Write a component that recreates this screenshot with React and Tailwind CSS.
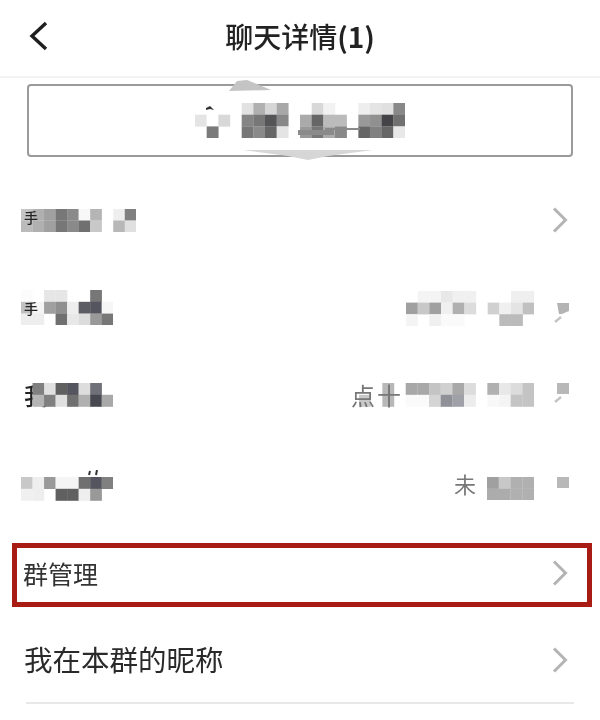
const CJK = { fontFamily: '"Noto Sans CJK SC", "Noto Sans", sans-serif' };

function Mosaic({ rows, w = 11.6, h = 11.7, className = "", children }) {
  const cols = Math.max(...rows.map((r) => r.length));
  return (
    <svg width={cols * w} height={rows.length * h} viewBox={`0 0 ${cols * w} ${rows.length * h}`} className={`block shrink-0 ${className}`}>
      {rows.map((r, y) =>
        r.map((c, x) => (c ? <rect key={`${x}-${y}`} x={x * w} y={y * h} width={w + 0.2} height={h + 0.2} fill={`#${c}`} /> : null))
      )}
      {children}
    </svg>
  );
}

function Chevron({ color = "#b4b4b4" }) {
  return (
    <svg width="16" height="26" viewBox="0 0 16 26" className="block shrink-0">
      <polyline points="2,1.5 13.5,13 2,24.5" fill="none" stroke={color} strokeWidth="3" />
    </svg>
  );
}

const _ = null;
const boxRows = [
  [_, _, _, _, "e2e2e2", "b0b0b0", "d6d6d6", "a8a8a8", _, _, "d8d8d8", "f2f2f2", _, _, "eeeeee", "e4e4e4", "e0e0e0", "888888"],
  ["e4e4e4", "ffffff", "d8d8d8", _, "858585", "777777", "555558", "888888", _, "aaaaaa", "666666", "bbbbbb", "bbbbbb", _, "999999", "909090", "444448", "707070"],
  [_, "7a7a7a", _, _, "777777", "8a8a8a", "666666", "e4e4e4", _, "999999", "777777", "aaaaaa", "888888", _, "666666", "808080", "666666", "e8e8e8"],
];
const row1 = [
  ["c4c4c4", "b0b0b0", "a0a0a0", "777777", "8a8a8a", "f8f8f8", "b5b5b5", _, "eeeeee", "808080"],
  ["bbbbbb", "b0b0b0", "a0a0a0", "777777", "8a8a8a", "707070", "c8c8c8", _, "b8b8b8", "e0e0e0"],
];
const row2 = [
  ["fcfcfc", _, "e6e6e6", "e6e6e6", _, _, "777777", _],
  ["c0c0c0", "f4f4f4", "a0a0a0", "909090", "eeeeee", "5c5c64", "555560", "f6f6f6"],
  ["eeeeee", "eeeeee", _, "707070", "e8e8e8", "dcdcdc", "999999", "777777"],
];
const row3 = [
  [_, "808080", "e0e0e0", "606060", "555560", "dddddd", "707078", _],
  [_, "b5b5b5", "808080", "e0e0e0", "707070", "b0b0b0", "484850", "a8a8a8"],
];
const row4 = [
  ["c8c8c8", "eeeeee", "999999", "f5f5f5", "f5f5f5", "707070", "555560", "808080"],
  ["f0f0f0", "eeeeee", _, "606060", "606060", "eeeeee", "999999", _],
];
const right2 = [
  [_, "f4f4f4", "f4f4f4", "e8e8e8", "f0f0f0", "f0f0f0", _, _, _, "efefef", "efefef"],
  ["a0a0a0", "c8c8c8", "a0a0a0", "f0f0f0", "b0b0b0", "dcdcdc", _, "d0d0d0", "f0f0f0", "e4e4e4", "c0c0c0"],
  ["f4f4f4", _, "f0f0f0", "fafafa", "fafafa", _, _, _, "bbbbbb", "bbbbbb", _],
];
const right3 = [
  [_, _, "b8b8b8", _, "a8a8a8", "a8a8a8", "c4c4c4", "d0d0d0", "a8a8a8", "dcdcdc", _, "b0b0b0", "e8e8e8", "dcdcdc", "c4c4c4"],
  ["c8c8c8", _, "b8b8b8", _, "fafafa", "fafafa", "d4d4d4", "909098", "a0a0a8", "ececec", _, "f8f8f8", "f4f4f4", "c4c4c4", "c4c4c4"],
];
const right4 = [
  ["a0a0a0", "c8c8c8", "b0b0b0", "b0b0b0"],
  ["acacac", "acacac", "b0b0b0", "b0b0b0"],
];

function Tip({ slant = false, tail = true }) {
  return (
    <svg width="16" height="22" viewBox="0 0 16 22" className="block shrink-0">
      {slant ? <polygon points="3,0 15,0 15,8 8,11 5,11" fill="#b4b4b4" /> : <rect x="3" y="0" width="12" height="11" fill="#b8b8b8" />}
      {tail ? <line x1="1" y1="19" x2="7" y2="14" stroke="#c4c4c4" strokeWidth="2.5" /> : null}
    </svg>
  );
}

function Row({ children }) {
  return <div className="flex h-[87.5px] items-center justify-between pl-[21px] pr-[30px]">{children}</div>;
}

export default function App() {
  return (
    <div className="h-[720px] w-[600px] overflow-hidden bg-white blur-[0.4px]" style={CJK}>
      <header className="grid h-[78px] grid-cols-[1fr_auto_1fr] items-center border-b-2 border-[#f3f3f3] pb-[4px]">
        <div className="pl-[29px]">
          <svg width="20" height="32" viewBox="0 0 20 32" className="block">
            <polyline points="17,3 3,16 17,29" fill="none" stroke="#1f1f1f" strokeWidth="3.4" />
          </svg>
        </div>
        <h1 className="text-[28px] font-medium leading-none text-[#222]">
          聊天详情<span className="font-bold">(1)</span>
        </h1>
        <div />
      </header>

      <div className="relative mx-[27px] mt-[6px] flex h-[73px] items-center justify-center rounded-[4px] border-2 border-[#9a9a9a]">
        <Mosaic rows={boxRows} w={11.67} h={11.7}>
          <path d="M130 25h35v2h-35zM103 27h36v5h-36z" fill="#8a8a8a" />
          <path d="M11 5l4-2 4 4-4-1-4 1z" fill="#333" />
        </Mosaic>
        <svg width="50" height="12" viewBox="0 0 50 12" className="absolute left-[196px] top-[-6px]">
          <path d="M12 1 L22 0 L46 10 L4 11 Z" fill="#c4c4c4" />
        </svg>
        <svg width="130" height="12" viewBox="0 0 130 12" className="absolute left-[214px] top-[64px]">
          <path d="M0 0 H130 L85 6 L65 10 L45 6 Z" fill="#d6d6d6" />
        </svg>
      </div>

      <div className="mt-[19.5px]">
        <Row>
          <div className="relative">
            <Mosaic rows={row1} w={11.53} h={11.5} />
            <span className="absolute left-[3px] top-[1px] text-[14px] font-medium leading-none text-[#222]">手</span>
          </div>
          <div className="pr-[2px]">
            <Chevron />
          </div>
        </Row>
        <Row>
          <div className="relative">
            <Mosaic rows={row2} w={11.53} h={11.8} />
            <span className="absolute left-[3px] top-[11px] text-[14px] font-medium leading-none text-[#222]">手</span>
          </div>
          <div className="flex items-start gap-[20px] pt-[1px]">
            <Mosaic rows={right2} w={11.67} h={11.6} />
            <div className="pt-[12px]">
              <Tip slant />
            </div>
          </div>
        </Row>
        <Row>
          <div className="relative">
            <span className="absolute left-[3px] top-0 text-[24px] font-medium leading-none text-[#222]">我</span>
            <Mosaic rows={row3} w={11.53} h={11.8} className="relative" />
          </div>
          <div className="flex items-start">
            <div className="relative">
              <Mosaic rows={right3} w={11.67} h={11.8} />
              <span className="absolute left-[-8px] top-0 text-[24px] leading-none tracking-[2px] text-[#777]">点十</span>
            </div>
            <div className="ml-[20px]">
              <Tip />
            </div>
          </div>
        </Row>
        <Row>
          <div className="relative mt-[12px]">
            <Mosaic rows={row4} w={11.53} h={11.8} />
            <svg width="20" height="6" viewBox="0 0 20 6" className="absolute left-[66px] top-[-7px]">
              <path d="M2 5l1-4M9 5l1-5" stroke="#333" strokeWidth="2" />
            </svg>
          </div>
          <div className="flex items-start pt-[11px]">
            <span className="mr-[11px] mt-[-5px] text-[22px] leading-none text-[#777]">未</span>
            <Mosaic rows={right4} w={11.75} h={11.7} />
            <div className="ml-[20px]">
              <Tip tail={false} />
            </div>
          </div>
        </Row>
      </div>

      <div className="ml-[12px] mr-[8px] mt-[16.5px] flex h-[64px] items-center justify-between border-[5px] border-[#a81c14] pb-[4px] pl-[6px] pr-[19px]">
        <span className="text-[25px] leading-none text-[#333]">群管理</span>
        <Chevron />
      </div>

      <div className="mx-[26px] mt-[10px] flex h-[87px] items-center justify-between border-b-2 border-[#e8e8e8] pr-[6px]">
        <span className="ml-[-2px] text-[28.5px] leading-none text-[#2a2a2a]">我在本群的昵称</span>
        <Chevron />
      </div>
    </div>
  );
}
